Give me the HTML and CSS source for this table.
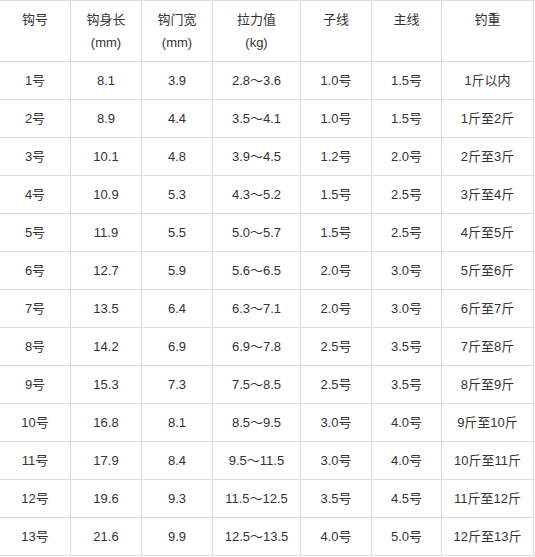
FILE: index.html
```html
<!DOCTYPE html>
<html lang="zh-CN">
<head>
<meta charset="utf-8">
<link rel="stylesheet" href="styles.css">
</head>
<body>
<div class="spec-table">
  <div class="cell head">钩号</div>
  <div class="cell head">钩身长<br>(mm)</div>
  <div class="cell head">钩门宽<br>(mm)</div>
  <div class="cell head">拉力值<br>(kg)</div>
  <div class="cell head">子线</div>
  <div class="cell head">主线</div>
  <div class="cell head">钓重</div>

  <div class="cell">1号</div><div class="cell">8.1</div><div class="cell">3.9</div><div class="cell">2.8～3.6</div><div class="cell">1.0号</div><div class="cell">1.5号</div><div class="cell">1斤以内</div>
  <div class="cell">2号</div><div class="cell">8.9</div><div class="cell">4.4</div><div class="cell">3.5～4.1</div><div class="cell">1.0号</div><div class="cell">1.5号</div><div class="cell">1斤至2斤</div>
  <div class="cell">3号</div><div class="cell">10.1</div><div class="cell">4.8</div><div class="cell">3.9～4.5</div><div class="cell">1.2号</div><div class="cell">2.0号</div><div class="cell">2斤至3斤</div>
  <div class="cell">4号</div><div class="cell">10.9</div><div class="cell">5.3</div><div class="cell">4.3～5.2</div><div class="cell">1.5号</div><div class="cell">2.5号</div><div class="cell">3斤至4斤</div>
  <div class="cell">5号</div><div class="cell">11.9</div><div class="cell">5.5</div><div class="cell">5.0～5.7</div><div class="cell">1.5号</div><div class="cell">2.5号</div><div class="cell">4斤至5斤</div>
  <div class="cell">6号</div><div class="cell">12.7</div><div class="cell">5.9</div><div class="cell">5.6～6.5</div><div class="cell">2.0号</div><div class="cell">3.0号</div><div class="cell">5斤至6斤</div>
  <div class="cell">7号</div><div class="cell">13.5</div><div class="cell">6.4</div><div class="cell">6.3～7.1</div><div class="cell">2.0号</div><div class="cell">3.0号</div><div class="cell">6斤至7斤</div>
  <div class="cell">8号</div><div class="cell">14.2</div><div class="cell">6.9</div><div class="cell">6.9～7.8</div><div class="cell">2.5号</div><div class="cell">3.5号</div><div class="cell">7斤至8斤</div>
  <div class="cell">9号</div><div class="cell">15.3</div><div class="cell">7.3</div><div class="cell">7.5～8.5</div><div class="cell">2.5号</div><div class="cell">3.5号</div><div class="cell">8斤至9斤</div>
  <div class="cell">10号</div><div class="cell">16.8</div><div class="cell">8.1</div><div class="cell">8.5～9.5</div><div class="cell">3.0号</div><div class="cell">4.0号</div><div class="cell">9斤至10斤</div>
  <div class="cell">11号</div><div class="cell">17.9</div><div class="cell">8.4</div><div class="cell">9.5～11.5</div><div class="cell">3.0号</div><div class="cell">4.0号</div><div class="cell">10斤至11斤</div>
  <div class="cell">12号</div><div class="cell">19.6</div><div class="cell">9.3</div><div class="cell">11.5～12.5</div><div class="cell">3.5号</div><div class="cell">4.5号</div><div class="cell">11斤至12斤</div>
  <div class="cell">13号</div><div class="cell">21.6</div><div class="cell">9.9</div><div class="cell">12.5～13.5</div><div class="cell">4.0号</div><div class="cell">5.0号</div><div class="cell">12斤至13斤</div>
</div>
</body>
</html>
```
FILE: styles.css
```css
html, body {
  margin: 0;
  padding: 0;
  background: #fff;
}
.spec-table {
  display: grid;
  grid-template-columns: 71px 71px 71px 88px 71px 70px 92px;
  width: 534px;
  border-top: 1px solid #dcdcdc;
  font-family: "Liberation Sans", "Noto Sans CJK SC", sans-serif;
  font-size: 13px;
  color: #333;
}
.cell {
  box-sizing: border-box;
  padding: 7px 2px;
  line-height: 23px;
  text-align: center;
  border-right: 1px solid #dcdcdc;
  border-bottom: 1px solid #dcdcdc;
  white-space: nowrap;
}
```
